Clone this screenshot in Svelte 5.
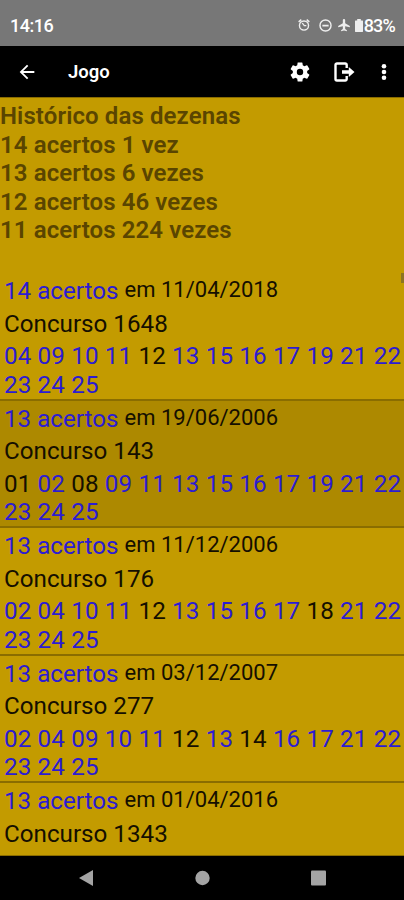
<script>
	const summary = [
		'Histórico das dezenas',
		'14 acertos 1 vez',
		'13 acertos 6 vezes',
		'12 acertos 46 vezes',
		'11 acertos 224 vezes'
	];

	// misses are the drawn numbers that were not on the ticket
	const results = [
		{
			hits: 14,
			date: '11/04/2018',
			contest: 1648,
			numbers: '04 09 10 11 12 13 15 16 17 19 21 22 23 24 25',
			misses: ['12']
		},
		{
			hits: 13,
			date: '19/06/2006',
			contest: 143,
			numbers: '01 02 08 09 11 13 15 16 17 19 21 22 23 24 25',
			misses: ['01', '08']
		},
		{
			hits: 13,
			date: '11/12/2006',
			contest: 176,
			numbers: '02 04 10 11 12 13 15 16 17 18 21 22 23 24 25',
			misses: ['12', '18']
		},
		{
			hits: 13,
			date: '03/12/2007',
			contest: 277,
			numbers: '02 04 09 10 11 12 13 14 16 17 21 22 23 24 25',
			misses: ['12', '14']
		},
		{
			hits: 13,
			date: '01/04/2016',
			contest: 1343,
			numbers: '',
			misses: []
		}
	];

	let selected = $state(143);
</script>

<div class="screen">
	<div class="status-bar">
		<span class="clock">14:16</span>
		<div class="status-icons">
			<svg class="alarm" viewBox="0 0 24 24" width="14" height="14">
				<path d="M22 5.7l-4.6-3.9-1.6 2 4.6 3.8zM7.9 3.4L6.600 1.800 2 5.700l1.600 1.900 4.600-3.900zM12 4a9 9 0 1 0 0 18 9 9 0 0 0 0-18zm0 15.600a6.600 6.600 0 1 1 0-13.200 6.600 6.600 0 0 1 0 13.200z" />
				<path d="M8 9l4 5h4v-2.200h-3L10 8z" />
			</svg>
			<svg class="dnd" viewBox="0 0 24 24" width="15" height="15">
				<path d="M12 2a10 10 0 1 0 0 20 10 10 0 0 0 0-20zm0 17.700a7.700 7.700 0 1 1 0-15.400 7.700 7.700 0 0 1 0 15.400zM7 10.800h10v2.600H7z" />
			</svg>
			<svg class="plane" viewBox="0 0 24 24" width="14" height="14">
				<path d="M22 16v-2.500l-8-4.500V3.500a2 2 0 0 0-4 0V9l-8 4.500V16l8-2v5l-3 2v1.500l5-1 5 1V21l-3-2v-5z" />
			</svg>
			<svg class="battery" viewBox="0 0 8 13" width="8" height="13">
				<path d="M2.200 0h3.600v1.500H7.500c.3 0 .5.2.5.5v10.500c0 .3-.2.5-.5.5h-7c-.3 0-.5-.2-.5-.5V2c0-.3.2-.5.5-.5h1.700z" />
			</svg>
			<span class="percent">83%</span>
		</div>
	</div>

	<header class="app-bar">
		<button class="icon-btn back" aria-label="Voltar">
			<svg viewBox="0 0 24 24" width="22" height="22">
				<path d="M20 11H7.830l5.590-5.590L12 4l-8 8 8 8 1.410-1.410L7.830 13H20z" />
			</svg>
		</button>
		<h1>Jogo</h1>
		<button class="icon-btn settings" aria-label="Configurações">
			<svg viewBox="0 0 24 24" width="24" height="24">
				<path d="M19.140 12.940c.04-.3.06-.61.06-.94 0-.32-.02-.64-.07-.94l2.030-1.580a.49.49 0 0 0 .12-.61l-1.920-3.320a.488.488 0 0 0-.59-.22l-2.390.96c-.5-.38-1.030-.7-1.620-.94l-.36-2.540a.484.484 0 0 0-.48-.41h-3.840c-.24 0-.43.17-.47.41l-.36 2.540c-.59.24-1.130.57-1.620.94l-2.390-.96c-.22-.08-.47 0-.59.22L2.740 8.870c-.12.21-.08.47.12.61l2.030 1.580c-.05.3-.09.63-.09.94s.02.64.07.94l-2.030 1.580a.49.49 0 0 0-.12.61l1.920 3.320c.12.22.37.29.59.22l2.390-.96c.5.38 1.030.7 1.620.94l.36 2.540c.05.24.24.41.48.41h3.840c.24 0 .44-.17.47-.41l.36-2.540c.59-.24 1.130-.56 1.620-.94l2.390.96c.22.08.47 0 .59-.22l1.920-3.320c.12-.22.07-.47-.12-.61zM12 15.200A3.200 3.200 0 0 1 8.800 12 3.200 3.200 0 0 1 12 8.800a3.200 3.200 0 0 1 3.200 3.200 3.200 3.200 0 0 1-3.200 3.200z" />
			</svg>
		</button>
		<button class="icon-btn exit" aria-label="Sair">
			<svg viewBox="0 0 21 20" width="21" height="20">
				<path d="M12.700 6V3a1.500 1.500 0 0 0-1.500-1.500H3A1.500 1.500 0 0 0 1.500 3v14A1.500 1.500 0 0 0 3 18.500h8.200a1.500 1.500 0 0 0 1.500-1.500v-3" fill="none" stroke="#fff" stroke-width="2.400" />
				<path d="M8 8.200h6.800V5l5.700 5-5.700 5v-3.200H8z" />
			</svg>
		</button>
		<button class="icon-btn more" aria-label="Mais opções">
			<svg viewBox="0 0 6 18" width="6" height="18">
				<circle cx="3" cy="3.200" r="2.300" />
				<circle cx="3" cy="9" r="2.300" />
				<circle cx="3" cy="14.800" r="2.300" />
			</svg>
		</button>
	</header>

	<main class="content">
		<div class="summary">
			{#each summary as line}
				<p>{line}</p>
			{/each}
		</div>

		<div class="results">
			{#each results as result}
				<div class="result" class:selected={result.contest === selected}>
					<div class="result-head">
						<span class="hits">{result.hits} acertos</span>
						<span class="date">em {result.date}</span>
					</div>
					<p class="contest">Concurso {result.contest}</p>
					{#if result.numbers}
						<p class="numbers">
							{#each result.numbers.split(' ') as number}
								<span class:miss={result.misses.includes(number)}>{number}</span>{' '}
							{/each}
						</p>
					{/if}
				</div>
			{/each}
		</div>
		<div class="scroll-thumb"></div>
	</main>

	<nav class="nav-bar">
		<svg viewBox="0 0 16 16" width="16" height="16"><path d="M15 0v16L1 8z" /></svg>
		<svg viewBox="0 0 16 16" width="16" height="16"><circle cx="8.500" cy="8" r="7.200" /></svg>
		<svg viewBox="0 0 16 16" width="16" height="16"><rect x="1" y=".5" width="15" height="15" rx="1" /></svg>
	</nav>
</div>

<style>
	:global(body) {
		margin: 0;
		background: #000;
	}

	.screen {
		display: flex;
		flex-direction: column;
		height: 900px;
		overflow: hidden;
		font-family: Roboto, sans-serif;
		color: #150f00;
	}

	p,
	h1 {
		margin: 0;
	}

	svg {
		display: block;
		fill: #fff;
	}

	.status-bar {
		flex: none;
		display: flex;
		justify-content: space-between;
		align-items: center;
		height: 46px;
		box-sizing: border-box;
		padding: 4px 9px 0 10px;
		background: #777;
		color: #fff;
	}

	.clock {
		font-size: 18px;
		font-weight: 500;
		letter-spacing: -0.5px;
	}

	.status-icons {
		display: flex;
		align-items: center;
	}

	.status-icons svg {
		fill: #eee;
	}

	.dnd {
		margin-left: 7px;
	}

	.plane {
		margin-left: 4px;
	}

	.battery {
		margin-left: 4px;
	}

	.percent {
		margin-left: 1px;
		font-size: 18px;
		font-weight: 500;
		letter-spacing: -0.8px;
	}

	.app-bar {
		flex: none;
		display: flex;
		align-items: center;
		height: 51px;
		box-sizing: border-box;
		padding: 0 17px 0 16px;
		background: #000;
		color: #fff;
	}

	.icon-btn {
		padding: 0;
		border: none;
		background: transparent;
	}

	h1 {
		flex: 1;
		margin-left: 30px;
		padding-top: 1px;
		font-size: 18.500px;
		font-weight: 600;
	}

	.exit {
		margin-left: 22px;
	}

	.more {
		margin-left: 26px;
	}

	.content {
		position: relative;
		flex: none;
		height: 759px;
		box-sizing: border-box;
		padding-top: 4px;
		border-top: 1px solid #8a6c00;
		border-bottom: 1px solid #8a6c00;
		background: #c39b00;
		overflow: hidden;
	}

	.summary {
		height: 171px;
		font-size: 24px;
		font-weight: 600;
		line-height: 28.500px;
		letter-spacing: 0.100px;
		color: #5a4500;
	}

	.result {
		height: 127.500px;
		box-sizing: border-box;
		padding: 4px 0 0 4px;
		border-bottom: 2px solid #8a6d00;
		font-size: 24.200px;
		line-height: 28.700px;
	}

	.selected {
		background: #ad8900;
	}

	.result-head {
		display: flex;
		align-items: flex-start;
		gap: 6px;
		height: 32.500px;
	}

	.hits,
	.numbers {
		color: #2c1cd2;
	}

	.date {
		font-size: 22px;
		line-height: 26px;
	}

	.contest {
		height: 32.500px;
	}

	.numbers {
		margin-right: -4px;
		letter-spacing: 0.140px;
	}

	.miss {
		color: #150f00;
	}

	.scroll-thumb {
		position: absolute;
		top: 175px;
		right: 0;
		width: 3px;
		height: 10px;
		background: #8c7420;
	}

	.nav-bar {
		flex: 1;
		display: flex;
		justify-content: center;
		align-items: center;
		gap: 100px;
		background: #000;
	}

	.nav-bar svg {
		fill: #a4a4a4;
	}
</style>
